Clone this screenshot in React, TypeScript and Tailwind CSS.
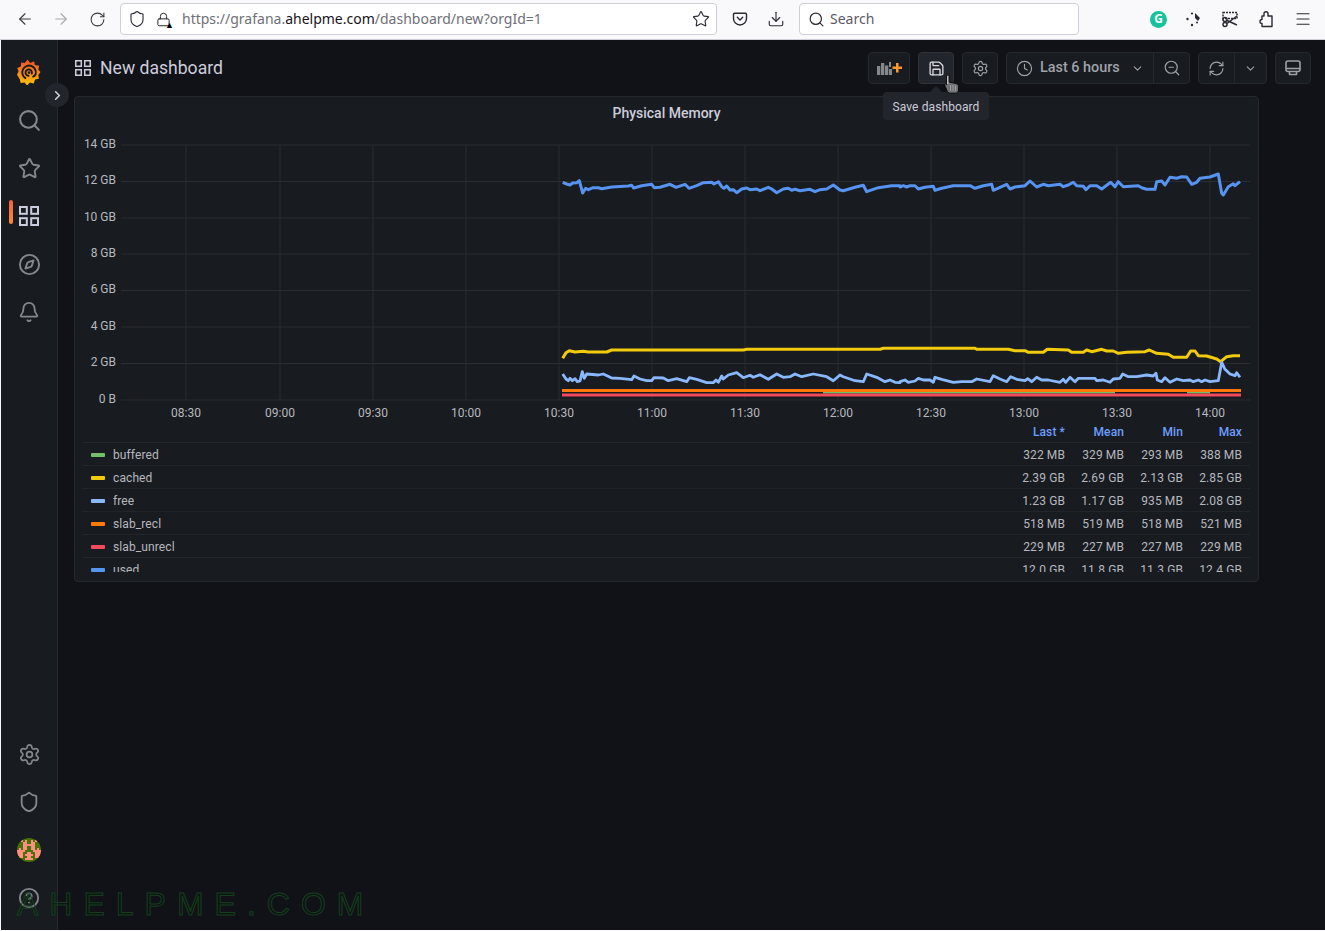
import React from "react";
import { ArrowLeft, ArrowRight, RotateCw, Shield, Star, Search, Download, ChevronRight, ChevronDown, Menu, Compass, Bell, Settings, Clock, ZoomOut, RefreshCw, Save, Lock, CircleHelp } from "lucide-react";

const mk = (ox: number, oy: number, pts: number[]) => {
  let s = "";
  for (let i = 0; i < pts.length; i += 2) {
    s += (i ? "L" : "M") + (ox + pts[i] / 3).toFixed(1) + " " + (oy + pts[i + 1] / 3).toFixed(1);
  }
  return s;
};
const cont = (d: string) => d.replace(/^M/, "L");

const used =
  mk(540, 165, [68,52,80,57,90,60,98,54,110,53,118,47,128,84,137,70,145,74,160,68,175,68,185,71,215,66,265,63,275,61,281,69,305,62,335,58,343,68,360,67,390,58,408,67,435,58,447,70,470,62,490,53,515,52,522,57,535,50,545,65,552,70,560,63,570,75,580,74,590,83,605,72,620,69,630,74,650,72,660,77,685,67,695,72,710,83,730,72,745,70,755,76,765,73,780,77,810,73,825,80,840,74,860,72,880,60,900,75,910,77,945,67,970,61,980,80,1015,68,1035,65,1055,62,1080,62]) +
  cont(mk(900, 165, [0,66,10,62,20,66,30,62,45,62,55,72,75,67,100,64,105,76,125,70,160,62,210,62,225,70,250,62,275,58,280,76,320,58,330,72,345,66,375,62,390,48,410,66,430,58,445,62,480,58,490,65,505,60,520,52,530,62,550,64,558,74,570,62,590,62,605,72,632,52,645,65,655,50,670,65,715,62,725,68,740,73,765,73,770,50,785,48,795,60,810,37,830,40,845,35,860,36,875,58,890,52,900,40,930,36,955,27,965,85,970,90,985,65,1000,56,1005,62,1020,50]));
const free =
  mk(540, 330, [68,132,78,147,85,152,90,145,97,152,105,146,112,155,120,153,127,125,133,145,140,132,175,135,190,132,215,144,240,145,275,149,282,138,300,147,320,152,335,152,342,143,370,144,385,152,410,146,440,155,448,143,470,148,500,158,520,158,528,150,535,157,545,138,550,147,565,135,590,128,610,143,630,136,640,142,660,134,685,148,710,132,730,142,750,140,765,132,785,140,820,132,860,140,880,152,900,135,910,140,945,152,970,155,980,132,1010,142,1035,155,1050,150,1065,157,1080,158]) +
  cont(mk(900, 330, [0,155,15,150,25,157,45,153,55,145,70,150,90,150,100,157,105,142,125,148,160,157,185,155,215,155,230,147,270,155,280,137,300,147,320,155,332,140,350,148,375,152,383,146,395,155,410,142,425,150,445,150,480,157,490,148,497,157,510,142,525,155,535,145,585,145,590,152,610,150,630,157,640,147,660,145,668,132,685,140,710,140,740,135,760,138,768,130,772,150,785,155,795,143,810,157,830,147,850,152,870,150,880,155,895,150,905,155,915,150,930,155,955,152,965,97,975,118,990,132,1005,137,1010,128,1020,142]));
const cached =
  mk(540, 330, [68,85,78,68,88,62,105,66,130,64,145,66,200,66,215,60,610,60,620,58,1020,58,1030,55,1080,55]) +
  cont(mk(900, 330, [0,55,225,55,230,58,325,58,345,62,375,62,385,67,430,67,442,58,505,60,515,67,550,67,560,60,575,65,605,58,620,63,640,63,655,70,680,67,735,65,748,60,770,70,805,73,820,82,860,82,872,63,885,63,895,77,920,78,950,87,962,95,980,80,1000,77,1020,77]));

const yTicks: [string, number][] = [["14 GB",145],["12 GB",181.5],["10 GB",218],["8 GB",254],["6 GB",290.5],["4 GB",327],["2 GB",363.5],["0 B",400]];
const xTicks: [string, number][] = [["08:30",186],["09:00",280],["09:30",373],["10:00",466],["10:30",559],["11:00",652],["11:30",745],["12:00",838],["12:30",931],["13:00",1024],["13:30",1117],["14:00",1210]];

const rows: [string, string, string, string, string, string][] = [
  ["buffered","bg-[#73bf69]","322 MB","329 MB","293 MB","388 MB"],
  ["cached","bg-[#f2cc0c]","2.39 GB","2.69 GB","2.13 GB","2.85 GB"],
  ["free","bg-[#8ab8ff]","1.23 GB","1.17 GB","935 MB","2.08 GB"],
  ["slab_recl","bg-[#ff780a]","518 MB","519 MB","518 MB","521 MB"],
  ["slab_unrecl","bg-[#f2495c]","229 MB","227 MB","227 MB","229 MB"],
  ["used","bg-[#5794f2]","12.0 GB","11.8 GB","11.3 GB","12.4 GB"],
];

function GridIcon({ size, sw }: { size: number; sw: number }) {
  const a = sw / 2;
  const w = (size - sw * 2 - size * 0.12) / 2;
  const b = size - a - w;
  return (
    <svg width={size} height={size} viewBox={`0 0 ${size} ${size}`} fill="none" stroke="currentColor" strokeWidth={sw}>
      <rect x={a} y={a} width={w} height={w} />
      <rect x={b} y={a} width={w} height={w} />
      <rect x={a} y={b} width={w} height={w} />
      <rect x={b} y={b} width={w} height={w} />
    </svg>
  );
}

function GrafanaLogo() {
  return (
    <svg width="24" height="26" viewBox="0 0 24 26">
      <defs>
        <linearGradient id="gf" x1="0" y1="1" x2="0" y2="0">
          <stop offset="0" stopColor="#fcc30f" />
          <stop offset="0.55" stopColor="#f7811e" />
          <stop offset="1" stopColor="#ef4f25" />
        </linearGradient>
      </defs>
      <path fill="url(#gf)" d="M10.500.5l2.600 3.400 4-1.600.8 3.800 4.200.6-.8 4 2.200 2.400-2.200 2.800.6 3.800-3.800.8-1.400 4-3.800-.9-2.800 2.800-2.600-3-3.800.6-.9-3.700L0 15.700l1.600-3.400L.2 9l3.600-1.500.4-3.900 3.600.3z" />
      <path fill="none" stroke="#181b1f" strokeWidth="1.900" strokeLinecap="round" d="M8.400 19.100A6.800 6.800 0 1 1 18.700 15c-.7 1.600-1.700 2.300-2.500 2.600M14.800 14.500a3.200 3.200 0 1 0-3.300 2.300" />
      <circle cx="12" cy="13.600" r="1.300" fill="#181b1f" />
    </svg>
  );
}

function Avatar() {
  const px = [
    "000000000000",
    "001010010100",
    "000110011000",
    "000111111000",
    "000110011000",
    "010110011010",
    "111100001111",
    "111001100111",
    "111011110111",
    "011001100110",
    "000011110000",
    "000000000000",
  ];
  return (
    <svg width="24" height="24" viewBox="0 0 24 24" shapeRendering="crispEdges">
      <defs><clipPath id="av"><circle cx="12" cy="12" r="12" /></clipPath></defs>
      <g clipPath="url(#av)">
        <rect width="24" height="24" fill="#4a7008" />
        {px.map((r, y) =>
          r.split("").map((c, x) => c === "1" ? <rect key={x + "-" + y} x={x * 2} y={y * 2} width="2" height="2" fill="#ff8f80" /> : null)
        )}
      </g>
    </svg>
  );
}

const navBtn = "flex h-12 items-center justify-center";

export default function App() {
  return (
    <div className="flex h-[931px] w-[1325px] flex-col overflow-hidden bg-[#f9f9fb] font-['Roboto',sans-serif]">
      {/* browser chrome */}
      <div className="flex h-[40px] shrink-0 items-center border-b border-[#cfcfd8] bg-[#f9f9fb] pb-px font-['Noto_Sans',sans-serif] text-[#5b5b66]">
        <div className="flex w-[120px] items-center pl-4 text-[#3a3a3e]">
          <ArrowLeft size={18} strokeWidth={1.500} />
          <ArrowRight size={18} strokeWidth={1.500} className="ml-[18px] text-[#a8a8ad]" />
          <RotateCw size={17} strokeWidth={1.500} className="ml-[19px]" />
        </div>
        <div className="flex h-[32px] w-[597px] items-center rounded border border-[#cfcfd8] bg-white pl-[7px] pr-[6px] text-[#2b2a33]">
          <Shield size={18} strokeWidth={1.500} />
          <span className="relative ml-[10px] flex h-4 w-4 items-center">
            <Lock size={15} strokeWidth={1.600} />
            <span className="absolute bottom-[-2px] right-[-2px] text-[9px] leading-none text-black">▲</span>
          </span>
          <span className="mb-[2px] ml-[10px] flex-1 truncate text-[14px] text-[#6f6f78]">
            https://grafana.<span className="text-[#15141a]">ahelpme.com</span>/dashboard/new?orgId=1
          </span>
          <Star size={18} strokeWidth={1.500} />
        </div>
        <div className="flex w-[82px] items-center pl-[15px] text-[#2b2a33]">
          <svg width="16" height="16" viewBox="0 0 16 16" fill="none" stroke="currentColor" strokeWidth="1.400">
            <path d="M2.500 2.200h11c.5 0 1 .4 1 1v4.300a6.500 6.500 0 0 1-13 0V3.200c0-.6.500-1 1-1z" />
            <path d="M5.300 6.300L8 9l2.700-2.700" strokeLinecap="round" />
          </svg>
          <Download size={18} strokeWidth={1.500} className="ml-[19px]" />
        </div>
        <div className="flex h-[32px] w-[280px] items-center rounded border border-[#cfcfd8] bg-white pl-2 text-[14px] text-[#5b5b66]">
          <Search size={17} strokeWidth={1.700} className="text-[#2b2a33]" />
          <span className="mb-[2px] ml-[5px]">Search</span>
        </div>
        <div className="flex flex-1 items-center pl-[71px] text-[#2b2a33]">
          <span className="flex h-[17px] w-[17px] items-center justify-center rounded-full bg-[#15c39a] text-[12px] font-bold leading-none text-white">G</span>
          <svg width="18" height="18" viewBox="0 0 18 18" className="ml-[18px]" fill="currentColor">
            <circle cx="2.500" cy="9" r="1.200" /><circle cx="7" cy="3.500" r="1.100" /><circle cx="7" cy="15" r="1.200" />
            <path d="M10 3l5 5-2 3-3-3z" /><circle cx="12" cy="12.500" r="1" />
          </svg>
          <svg width="18" height="18" viewBox="0 0 18 18" className="ml-[18px]" fill="none" stroke="currentColor" strokeWidth="1.500">
            <rect x="2" y="2.500" width="14" height="6" strokeDasharray="2 1" />
            <circle cx="4" cy="14.500" r="2" /><circle cx="4" cy="9.500" r="2" />
            <path d="M6 13.500L16 6M6 10.500L16 15" />
          </svg>
          <svg width="18" height="18" viewBox="0 0 18 18" className="ml-[18px]" fill="none" stroke="currentColor" strokeWidth="1.400" strokeLinejoin="round">
            <path d="M5 6h2V3.800a2 2 0 1 1 4 0V6h4v10.500H5V13.500a2 2 0 0 1 0-4z" />
          </svg>
          <Menu size={18} strokeWidth={1.500} className="ml-[19px]" />
        </div>
      </div>

      <div className="flex min-h-0 flex-1 pb-px pl-px">
        {/* sidebar */}
        <div className="flex w-[57px] shrink-0 flex-col items-stretch border-r border-[#25282d] bg-[#181b1f] text-[#85878c]">
          <div className="flex h-[56px] items-center justify-center pt-[7px]"><GrafanaLogo /></div>
          <div className="flex flex-col">
            <div className={navBtn}><Search size={25} strokeWidth={2} /></div>
            <div className={navBtn}><Star size={23} strokeWidth={2} /></div>
            <div className={navBtn + " relative"}>
              <span className="absolute left-[8px] top-[8px] h-[24px] w-1 rounded-sm bg-gradient-to-b from-[#f55f3e] to-[#ff8833]" />
              <span className="text-[#ccccdc]"><GridIcon size={20} sw={2} /></span>
            </div>
            <div className={navBtn}><Compass size={23} strokeWidth={2} /></div>
            <div className={navBtn}><Bell size={22} strokeWidth={2} /></div>
          </div>
          <div className="mt-auto flex flex-col pb-[8px]">
            <div className={navBtn}><Settings size={23} strokeWidth={1.800} /></div>
            <div className={navBtn}><Shield size={22} strokeWidth={2} /></div>
            <div className={navBtn}><Avatar /></div>
            <div className={navBtn}><CircleHelp size={22} strokeWidth={2} /></div>
          </div>
        </div>

        {/* main */}
        <div className="relative flex-1 bg-[#111217]">
          {/* toolbar */}
          <div className="flex h-[56px] items-center pl-[17px]">
            <div className="flex h-[32px] items-center text-[#ccccdc]">
              <GridIcon size={16} sw={1.500} />
              <span className="ml-[9px] text-[17.6px]">New dashboard</span>
            </div>
            <div className="ml-auto flex items-center gap-2 pr-[14px] text-[#9fa1a6]">
              <div className="flex h-[32px] w-[42px] items-center justify-center rounded-sm border border-[#25282d] bg-[#181b1f]">
                <svg width="26" height="16" viewBox="0 0 26 16">
                  <path fill="#85878c" d="M1 6h3.300v9H1zM5 3h3.300v12H5zM9 5.500h3.300V15H9zM13 9h3v6h-3zM13 2h2v5h-2z" />
                  <path fill="#ff9830" d="M20 3h2.500v3.500H26V9h-3.500v3.500H20V9h-3.500V6.500H20z" />
                </svg>
              </div>
              <div className="flex h-[32px] w-[36px] items-center justify-center rounded-sm border border-[#2f3238] bg-[#22252b] text-[#d8d9de]">
                <Save size={17} strokeWidth={1.900} />
              </div>
              <div className="flex h-[32px] w-[36px] items-center justify-center rounded-sm border border-[#25282d] bg-[#181b1f]">
                <Settings size={17} strokeWidth={1.700} />
              </div>
              <div className="flex h-[32px] rounded-sm border border-[#25282d] bg-[#181b1f]">
                <div className="flex w-[146px] items-center pl-[9px] text-[14.4px] font-medium text-[#9fa3aa]">
                  <Clock size={17} strokeWidth={1.600} />
                  <span className="ml-[7px]">Last 6 hours</span>
                  <ChevronDown size={13} strokeWidth={2} className="ml-[11px]" />
                </div>
                <div className="flex w-[36px] items-center justify-center border-l border-[#25282d]">
                  <ZoomOut size={18} strokeWidth={1.600} />
                </div>
              </div>
              <div className="flex h-[32px] rounded-sm border border-[#25282d] bg-[#181b1f]">
                <div className="flex w-[35px] items-center justify-center"><RefreshCw size={17} strokeWidth={1.600} /></div>
                <div className="flex w-[32px] items-center justify-center border-l border-[#25282d]"><ChevronDown size={13} strokeWidth={2} /></div>
              </div>
              <div className="flex h-[32px] w-[36px] items-center justify-center rounded-sm border border-[#25282d] bg-[#181b1f]">
                <svg width="18" height="18" viewBox="0 0 18 18" fill="none" stroke="currentColor" strokeWidth="1.600" strokeLinejoin="round">
                  <rect x="2" y="2" width="14" height="10.500" rx="2" />
                  <path d="M2 9.500h14M5.500 12.500v3h7v-3" />
                </svg>
              </div>
            </div>
          </div>

          {/* panel */}
          <div className="ml-[16px] h-[486px] w-[1185px] overflow-hidden rounded-sm border border-[#25282d] bg-[#181b1f]">
            <div className="flex h-[32px] items-center justify-center text-[14px] font-medium text-[#ccccdc]">Physical Memory</div>
            <svg viewBox="75 129 1183 296" width="1183" height="296" className="block font-['Roboto',sans-serif]">
              {yTicks.map(([t, y]) => (
                <g key={t}>
                  <line x1="121" x2="1250" y1={y} y2={y} stroke="#2a2d32" />
                  <text x="116" y={Math.floor(y) + 3} textAnchor="end" fontSize="12" fill="#b7b8bf">{t}</text>
                </g>
              ))}
              {xTicks.map(([t, x]) => (
                <g key={t}>
                  <line x1={x} x2={x} y1="145" y2="400" stroke="#2a2d32" />
                  <text x={x} y="417" textAnchor="middle" fontSize="12" fill="#b7b8bf">{t}</text>
                </g>
              ))}
              <g fill="none" strokeLinejoin="round">
                <path d={used} stroke="#5794f2" strokeWidth="3" />
                <path d={cached} stroke="#f2cc0c" strokeWidth="3" />
                <path d={free} stroke="#8ab8ff" strokeWidth="2.800" />
                <path d="M823 392.500H1115M1187 392.500H1210" stroke="#73bf69" strokeWidth="2" />
                <path d="M562 390.500H1241" stroke="#ff780a" strokeWidth="3" />
                <path d="M562 395H1241" stroke="#f2495c" strokeWidth="3" />
              </g>
            </svg>
            {/* legend */}
            <div className="mx-[8px] h-[147px] overflow-hidden text-[12px] tracking-[0.1px] text-[#b7b8bf]">
              <div className="flex h-[17px] items-center justify-end pb-[4px] pr-[8px] font-medium text-[#6e9fff]">
                <span className="w-[59px] text-right">Last *</span>
                <span className="w-[59px] text-right">Mean</span>
                <span className="w-[59px] text-right">Min</span>
                <span className="w-[59px] text-right">Max</span>
              </div>
              {rows.map(([n, c, a, b, d, e]) => (
                <div key={n} className="flex h-[23px] items-center border-t border-[#222529] pr-[8px] pt-[2px]">
                  <span className={"ml-[8px] h-[4px] w-[14px] rounded-[1px] " + c} />
                  <span className="ml-[8px] flex-1">{n}</span>
                  <span className="w-[59px] text-right">{a}</span>
                  <span className="w-[59px] text-right">{b}</span>
                  <span className="w-[59px] text-right">{d}</span>
                  <span className="w-[59px] text-right">{e}</span>
                </div>
              ))}
            </div>
          </div>

          {/* expand sidebar button */}
          <div className="absolute left-[-13px] top-[43px] flex h-6 w-6 items-center justify-center rounded-full bg-[#22252b] text-[#d0d1d6]">
            <ChevronRight size={15} strokeWidth={2.600} />
          </div>

          {/* tooltip */}
          <div className="absolute left-[825px] top-[52px] flex h-[28px] w-[106px] items-center justify-center rounded-sm bg-[#22252b] pt-[2px] text-[12px] tracking-[0.1px] text-[#ccccdc]">Save dashboard</div>
          <div className="absolute left-[872px] top-[46px] h-0 w-0 border-x-[6px] border-b-[6px] border-x-transparent border-b-[#22252b]" />

          {/* pointer */}
          <svg width="16" height="20" viewBox="0 0 16 20" className="absolute left-[886px] top-[34px]">
            <path d="M2.500 1.800C2.500.4 5 .4 5 1.800V8l7 1.500c1.500.4 2.500 1.200 2.500 3V16c0 1.800-1.300 3.200-3 3.200H6c-1.500 0-2.500-1-3-2.500L.8 11.500C.4 10 2 9.300 2.500 10.500z" fill="#6f7174" stroke="#0c0c0c" strokeWidth="1" />
            <path d="M3.200 2h1.100v8H3.200z" fill="#d8d8d8" />
            <path d="M6 11h1v6H6zM8.500 11h1v6h-1zM11 11.500h1V17h-1z" fill="#9a9c9f" />
          </svg>

          {/* watermark */}
          <div className="absolute left-[-41px] top-[848px] font-['Liberation_Sans',sans-serif] text-[32px] font-normal leading-none tracking-[11px] text-transparent [-webkit-text-stroke:1px_#11401a]">AHELPME.COM</div>
        </div>
      </div>
    </div>
  );
}
